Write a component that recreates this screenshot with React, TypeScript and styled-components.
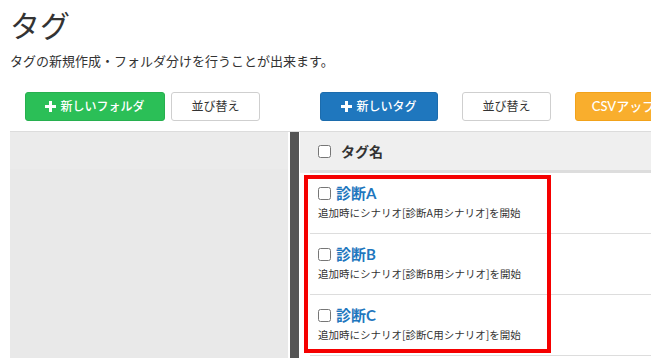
import React from 'react';
import styled, { createGlobalStyle } from 'styled-components';

const GlobalStyle = createGlobalStyle`
  html, body {
    margin: 0;
    padding: 0;
    background: #fff;
    overflow: hidden;
  }
  body {
    font-family: "Lato", "Noto Sans CJK JP", sans-serif;
    color: #333;
  }
`;

const Page = styled.div`
  width: 651px;
  height: 358px;
  padding-left: 10px;
  box-sizing: border-box;
  overflow: hidden;
`;

const Title = styled.h1`
  margin: 0;
  padding-top: 6px;
  font-family: "Noto Sans CJK JP", sans-serif;
  font-size: 30px;
  font-weight: 400;
  line-height: 36px;
  color: #333;
`;

const Lead = styled.p`
  margin: 10px 0 0;
  font-family: "Noto Sans CJK JP", sans-serif;
  font-size: 13px;
  line-height: 18px;
  color: #333;
`;

const Toolbar = styled.div`
  display: grid;
  grid-template-columns: 290px 1fr;
  margin-top: 22px;
  height: 29px;
`;

const ButtonGroup = styled.div<{ $inset: number; $gap: number }>`
  display: flex;
  gap: ${(p) => p.$gap}px;
  padding-left: ${(p) => p.$inset}px;
  white-space: nowrap;
`;

const tones = {
  green: { bg: '#2bbf57', border: '#27b04f', color: '#fff' },
  blue: { bg: '#1f77be', border: '#1c6cad', color: '#fff' },
  orange: { bg: '#f9ae2d', border: '#f2a21a', color: '#fff' },
  plain: { bg: '#fff', border: '#cfcfcf', color: '#333' },
};

const Button = styled.button<{ $tone: keyof typeof tones; $width: number; $size?: number }>`
  flex: 0 0 ${(p) => p.$width}px;
  height: 29px;
  display: flex;
  align-items: center;
  justify-content: center;
  gap: 4px;
  padding: 0;
  border-radius: 3px;
  border: 1px solid ${(p) => tones[p.$tone].border};
  background: ${(p) => tones[p.$tone].bg};
  color: ${(p) => tones[p.$tone].color};
  font-family: "Lato", "Noto Sans CJK JP", sans-serif;
  font-size: ${(p) => p.$size ?? 12}px;
  font-weight: ${(p) => (p.$tone === 'plain' ? 400 : 500)};
  line-height: 1;
`;

const Plus = styled.svg`
  width: 11px;
  height: 11px;
  flex: 0 0 auto;
`;

const Board = styled.div`
  display: flex;
  margin-top: 10px;
  border-top: 1px solid #dcdcdc;
  height: 226px;
`;

const Sidebar = styled.div`
  flex: 0 0 278px;
  background: #e9e9e9;
  display: flex;
  flex-direction: column;
`;

const SidebarHead = styled.div`
  height: 37px;
  background: #ebebeb;
`;

const Scrollbar = styled.div`
  flex: 0 0 9px;
  margin-left: 2px;
  background: #555;
`;

const Main = styled.div`
  flex: 1;
  margin-left: 1px;
  padding-left: 10px;
  min-width: 0;
`;

const HeadRow = styled.div`
  margin-left: -10px;
  padding-left: 10px;
  background: #efefef;
`;

const HeadCell = styled.div`
  height: 38px;
  display: flex;
  align-items: center;
  gap: 10px;
  padding-left: 8px;
  border-bottom: 3px solid #dddddd;
  font-family: "Noto Sans CJK JP", sans-serif;
  font-size: 14px;
  font-weight: 700;
  color: #333;
`;

const Check = styled.input.attrs({ type: 'checkbox' })`
  margin: 0;
  width: 13px;
  height: 13px;
  flex: 0 0 auto;
`;

const Rows = styled.div`
  position: relative;
`;

const Row = styled.div`
  height: 61px;
  box-sizing: border-box;
  padding: 10px 8px 0;
  border-bottom: 1px solid #dddddd;
  background: #fff;
`;

const RowTitle = styled.div`
  display: flex;
  align-items: center;
  gap: 5px;
`;

const TagName = styled.a`
  font-family: "Lato", "Noto Sans CJK JP", sans-serif;
  font-size: 15px;
  font-weight: 700;
  line-height: 20px;
  color: #1f77be;
  text-decoration: none;
`;

const Note = styled.div`
  margin-top: 3px;
  font-family: "Noto Sans CJK JP", sans-serif;
  font-size: 10.5px;
  line-height: 14px;
  color: #333;
  white-space: nowrap;
`;

const Highlight = styled.div`
  position: absolute;
  left: -6px;
  top: 2px;
  width: 247px;
  height: 178px;
  box-sizing: border-box;
  border: 4px solid #f50000;
  pointer-events: none;
`;

const PlusIcon: React.FC = () => (
  <Plus viewBox="0 0 11 11">
    <path d="M4 0h3v4h4v3H7v4H4V7H0V4h4z" fill="currentColor" />
  </Plus>
);

const tags = ['A', 'B', 'C'];

const App: React.FC = () => (
  <>
    <GlobalStyle />
    <Page>
      <Title>タグ</Title>
      <Lead>タグの新規作成・フォルダ分けを行うことが出来ます。</Lead>

      <Toolbar>
        <ButtonGroup $inset={15} $gap={6}>
          <Button $tone="green" $width={140}>
            <PlusIcon />
            新しいフォルダ
          </Button>
          <Button $tone="plain" $width={89}>並び替え</Button>
        </ButtonGroup>
        <ButtonGroup $inset={20} $gap={24}>
          <Button $tone="blue" $width={118}>
            <PlusIcon />
            新しいタグ
          </Button>
          <Button $tone="plain" $width={89}>並び替え</Button>
          <Button $tone="orange" $width={136} $size={13}>CSVアップロード</Button>
        </ButtonGroup>
      </Toolbar>

      <Board>
        <Sidebar>
          <SidebarHead />
        </Sidebar>
        <Scrollbar />
        <Main>
          <HeadRow>
            <HeadCell>
              <Check />
              タグ名
            </HeadCell>
          </HeadRow>
          <Rows>
            {tags.map((t) => (
              <Row key={t}>
                <RowTitle>
                  <Check />
                  <TagName>診断{t}</TagName>
                </RowTitle>
                <Note>追加時にシナリオ[診断{t}用シナリオ]を開始</Note>
              </Row>
            ))}
            <Highlight />
          </Rows>
        </Main>
      </Board>
    </Page>
  </>
);

export default App;
